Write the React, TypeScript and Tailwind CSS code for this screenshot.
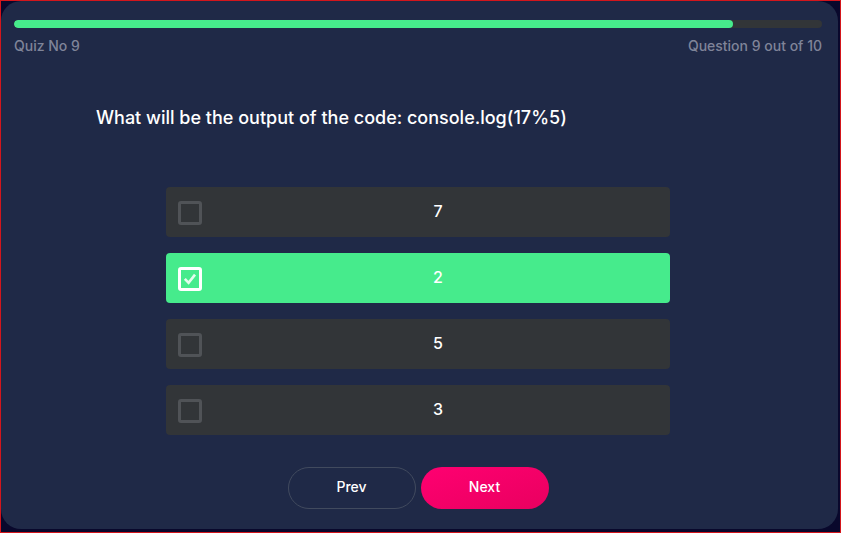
import { useState } from "react";

const options = ["7", "2", "5", "3"];

function Answer({ label, checked, onToggle }: { label: string; checked: boolean; onToggle: () => void }) {
  return (
    <label
      className={`flex h-[50px] cursor-pointer items-start rounded pt-3.5 pl-3 ${checked ? "bg-[#46eb8c]" : "bg-[#323538]"}`}
    >
      <span className="grid size-6 shrink-0">
        <input
          type="checkbox"
          checked={checked}
          onChange={onToggle}
          className="col-start-1 row-start-1 m-0 size-6 appearance-none rounded-[3px] border-3 border-[#505357] checked:border-white"
        />
        {checked && (
          <svg
            viewBox="0 0 24 24"
            className="pointer-events-none col-start-1 row-start-1 size-6 text-[#e4fcee]"
            fill="none"
            stroke="currentColor"
            strokeWidth="2.6"
            aria-hidden="true"
          >
            <path d="M6.8 11.8 10.6 15.8 17 7.6" />
          </svg>
        )}
      </span>
      <span className="flex-1 text-center text-base leading-5 font-medium">
        <span className="pl-1">{label}</span>
      </span>
    </label>
  );
}

export default function App() {
  const [selected, setSelected] = useState("2");

  return (
    <div className="min-h-screen border border-[#d3161c] bg-[#09082c] pr-0.5 pb-[3px] font-['Inter',sans-serif] text-white">
      <main className="flex min-h-[528px] flex-col rounded-[20px] bg-[#1f2947] pt-[19px] pr-4 pb-5 pl-[13px]">
        <div
          role="progressbar"
          aria-label="Quiz progress"
          aria-valuenow={89}
          className="h-2 overflow-hidden rounded-full bg-[#323538]"
        >
          <div className="h-full w-[89%] rounded-full bg-[#46eb8c]" />
        </div>
        <div className="mt-2 flex justify-between text-sm leading-5 font-medium text-[#7f8499]">
          <span>Quiz No 9</span>
          <span>Question 9 out of 10</span>
        </div>

        <h1 className="mt-[50px] px-[82px] text-lg leading-6 font-medium">
          What will be the output of the code: console.log(17%5)
        </h1>

        <div className="mx-auto mt-[57px] flex w-full max-w-[504px] flex-col gap-4">
          {options.map((option) => (
            <Answer
              key={option}
              label={option}
              checked={option === selected}
              onToggle={() => setSelected(option)}
            />
          ))}
        </div>

        <div className="mt-8 flex justify-center gap-[5px] text-sm leading-5 font-medium">
          <button type="button" className="h-[42px] w-32 rounded-full border border-[#414a5e] pb-0.5">
            Prev
          </button>
          <button
            type="button"
            className="h-[42px] w-32 rounded-full bg-linear-to-br from-[#ff0071] to-[#e9005f] pb-0.5"
          >
            Next
          </button>
        </div>
      </main>
    </div>
  );
}
